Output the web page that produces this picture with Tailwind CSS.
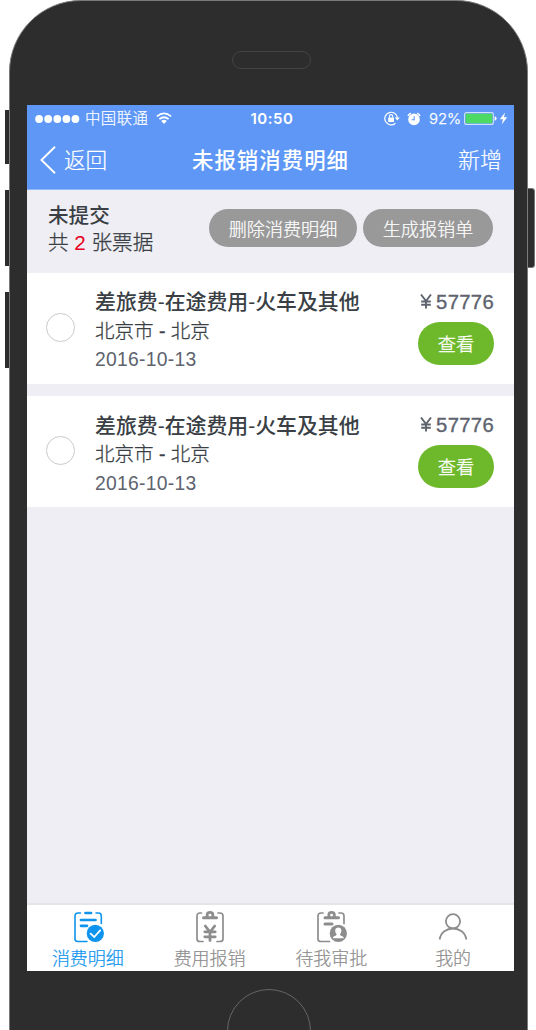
<!DOCTYPE html>
<html lang="zh-CN">
<head>
<meta charset="utf-8">
<title>未报销消费明细</title>
<script src="https://cdn.jsdelivr.net/npm/@tailwindcss/browser@4"></script>
</head>
<body class="bg-white font-['Liberation_Sans','Noto_Sans_CJK_SC',sans-serif]">
<div class="relative w-[536px] h-[1030px] overflow-hidden whitespace-nowrap">
  <!-- side keys -->
  <div class="absolute left-[5px] top-[110px] w-2 h-[54px] bg-[#2d2d2d]"></div>
  <div class="absolute left-[5px] top-[190px] w-2 h-[76px] bg-[#2d2d2d]"></div>
  <div class="absolute left-[5px] top-[292px] w-2 h-[76px] bg-[#2d2d2d]"></div>
  <div class="absolute left-[522px] top-[188px] w-[13px] h-[80px] rounded-[3px] bg-[#2d2d2d] border border-[#777]"></div>
  <!-- body -->
  <div class="relative ml-[9px] w-[519px] h-[1100px] rounded-t-[72px] bg-[#2d2d2d] border border-[#777b79] pl-[17px] pr-[13px] flex flex-col">
    <div class="h-[104px] flex justify-center pt-[50px] pl-[1px]">
      <div class="w-[79px] h-[18px] rounded-full border border-[#434343]"></div>
    </div>
    <div class="w-[487px] h-[866px] bg-[#efeef4] flex flex-col">
      <header class="h-[85px] bg-[#5e97f6] border-b border-[#8fb6f6] text-white">
        <div class="h-[27px] grid grid-cols-[1fr_auto_1fr] items-center">
          <div class="flex items-center pl-[8px]">
            <svg class="w-[45px] h-[8px]" viewBox="0 0 45 8" fill="#fff"><circle cx="4.1" cy="4" r="3.9"/><circle cx="13.2" cy="4" r="3.9"/><circle cx="22.3" cy="4" r="3.9"/><circle cx="31.4" cy="4" r="3.9"/><circle cx="40.4" cy="4" r="3.9"/></svg>
            <span class="ml-[5px] pt-[1px] text-[15.4px] leading-[26px] tracking-[0.45px] font-light [-webkit-text-stroke:0.2px]">中国联通</span>
            <svg class="ml-[8px] w-[16px] h-[13px]" viewBox="0 0 16 13"><g fill="none" stroke="#fff" stroke-width="1.8"><path d="M.9 4.4Q8-1.6 15.1 4.4"/><path d="M3.4 7.1Q8 3.3 12.6 7.1"/></g><path d="M5.2 9Q8 6.7 10.8 9L8 12.1Z" fill="#fff"/></svg>
          </div>
          <span class="font-['Inter'] font-semibold text-[15px] tracking-[0.55px] pl-[3px] pt-[1px]">10:50</span>
          <div class="flex items-center justify-end pr-[6px]">
            <svg class="w-[16px] h-[15px]" viewBox="0 0 16 15"><path d="M11.4 12.2A6.3 6.3 0 1 1 13.4 7" fill="none" stroke="#fff" stroke-width="1.2"/><path d="M10.8 6.5h5L13.3 9.6Z" fill="#fff"/><rect x="4.2" y="6.4" width="5.8" height="4.6" rx=".5" fill="#fff"/><path d="M5.5 6.6V5.2a1.6 1.6 0 0 1 3.200 0v1.4" fill="none" stroke="#fff" stroke-width="1.1"/></svg>
            <svg class="ml-[7px] w-[14px] h-[14px]" viewBox="0 0 14 14"><circle cx="7" cy="7.4" r="5.800" fill="#fff"/><path d="M1 4A4.5 4.5 0 0 1 4 1.2M10 1.2A4.5 4.5 0 0 1 13 4" fill="none" stroke="#fff" stroke-width="1.5"/><path d="M7.2 4.3V7.8H4.6" fill="none" stroke="#5e97f6" stroke-width="1.1"/></svg>
            <span class="ml-[8px] pt-[1px] font-['Inter'] font-light text-[15px] -tracking-[0.1px] [-webkit-text-stroke:0.25px]">92%</span>
            <svg class="ml-[3px] w-[33px] h-[13px]" viewBox="0 0 33 13"><rect x=".6" y=".6" width="28.8" height="11.8" rx="2" fill="none" stroke="#cfe0fb" stroke-width="1.1"/><rect x="1.7" y="1.7" width="26.600" height="9.6" rx="1" fill="#4cd964"/><path d="M30.6 4.2q2 .4 2 2.3t-2 2.3Z" fill="#fff"/></svg>
            <svg class="ml-[2px] w-[9px] h-[13px]" viewBox="0 0 9 13"><path d="M6 .6.8 7.300H4L2.600 12.500 8.300 5.300H5Z" fill="#fff"/></svg>
          </div>
        </div>
        <div class="h-[57px] grid grid-cols-[1fr_auto_1fr] items-center">
          <div class="flex items-center pl-[13px]">
            <svg class="w-[16px] h-[28px]" viewBox="0 0 16 28"><path d="M15 .8 1.5 14 15 27.2" fill="none" stroke="#fff" stroke-width="1.9"/></svg>
            <span class="ml-[8px] pt-[1px] text-[21.6px] font-light [-webkit-text-stroke:0.2px]">返回</span>
          </div>
          <span class="pt-[2px] text-[21.4px] tracking-[1.05px] font-medium">未报销消费明细</span>
          <span class="justify-self-end pr-[12px] text-[22px] font-light [-webkit-text-stroke:0.2px]">新增</span>
        </div>
      </header>
      <section class="h-[83px] flex text-[#3a3f45] pl-[21px] pr-[21px]">
        <div class="pt-[12px] text-[20.6px] leading-[27px]">
          <div class="font-medium">未提交</div>
          <div class="font-light [-webkit-text-stroke:0.3px]">共 <span class="text-[#e60021] [-webkit-text-stroke:0px]">2</span> 张票据</div>
        </div>
        <div class="ml-auto pt-[19px] flex gap-[6px] text-white text-[18.1px] font-light [-webkit-text-stroke:0.2px]">
          <div class="w-[148px] h-[38px] pt-[6px] rounded-full bg-[#999] flex items-center justify-center">删除消费明细</div>
          <div class="w-[130px] h-[38px] pt-[6px] rounded-full bg-[#999] flex items-center justify-center">生成报销单</div>
        </div>
      </section>
      <main class="flex-1 flex flex-col gap-[12px]">
        <article class="h-[111px] bg-white flex pl-[19px] pr-[20px]">
          <div class="mt-[40px] size-[29px] rounded-full border-[1.5px] border-[#c9cacc]"></div>
          <div class="ml-[20px] pt-[15px] leading-[29px] text-[#3a3f45]">
            <div class="-mt-px text-[20.9px] font-medium">差旅费-在途费用-火车及其他</div>
            <div class="mt-px text-[19.5px] font-light [-webkit-text-stroke:0.3px]">北京市 - 北京</div>
            <div class="-mt-px text-[19.3px] text-[#5e636e] tracking-[0.3px]">2016-10-13</div>
          </div>
          <div class="ml-auto flex flex-col items-end">
            <div class="mt-[15px] leading-[29px] text-[20.3px] text-[#5e636e] tracking-[0.3px] flex [-webkit-text-stroke:0.35px]"><svg class="w-[12px] h-[15px] mt-[6px] mr-[4px]" viewBox="0 0 12 15"><path d="M1 .5 6 7 11 .5M6 7V14.500M1.200 7.500h9.600M1.200 10.700h9.600" fill="none" stroke="#5e636e" stroke-width="1.9"/></svg>57776</div>
            <div class="mt-[5px] w-[76px] h-[43px] pt-[5px] rounded-full bg-[#6eb92b] text-white text-[18.2px] font-light [-webkit-text-stroke:0.3px] flex items-center justify-center">查看</div>
          </div>
        </article>
        <article class="h-[111px] bg-white flex pl-[19px] pr-[20px]">
          <div class="mt-[40px] size-[29px] rounded-full border-[1.5px] border-[#c9cacc]"></div>
          <div class="ml-[20px] pt-[15px] leading-[29px] text-[#3a3f45]">
            <div class="text-[20.9px] font-medium">差旅费-在途费用-火车及其他</div>
            <div class="text-[19.5px] font-light [-webkit-text-stroke:0.3px]">北京市 - 北京</div>
            <div class="text-[19.3px] text-[#5e636e] tracking-[0.3px]">2016-10-13</div>
          </div>
          <div class="ml-auto flex flex-col items-end">
            <div class="mt-[15px] leading-[29px] text-[20.3px] text-[#5e636e] tracking-[0.3px] flex [-webkit-text-stroke:0.35px]"><svg class="w-[12px] h-[15px] mt-[6px] mr-[4px]" viewBox="0 0 12 15"><path d="M1 .5 6 7 11 .5M6 7V14.500M1.200 7.500h9.600M1.200 10.700h9.600" fill="none" stroke="#5e636e" stroke-width="1.9"/></svg>57776</div>
            <div class="mt-[5px] w-[76px] h-[43px] pt-[5px] rounded-full bg-[#6eb92b] text-white text-[18.2px] font-light [-webkit-text-stroke:0.3px] flex items-center justify-center">查看</div>
          </div>
        </article>
      </main>
      <nav class="h-[68px] bg-white border-t-2 border-[#e5e5e7] grid grid-cols-4 text-[18px] leading-[24px] font-light text-[#8d8d8d]">
        <div class="flex flex-col items-center gap-[3px] pt-[6px] text-[#0d94ee]">
          <svg class="ml-[2px] w-[30px] h-[33px]" viewBox="0 0 30 33" fill="none" stroke="currentColor" stroke-linecap="round"><path d="M6.500 2H4Q1 2 1 5V28Q1 30.500 4 30.500H13M22 2h2.500Q27.300 2 27.300 5V12.500" stroke-width="1.6"/><path d="M11.500 2h5.500M7 9h14.500M7 14.800h6" stroke-width="2.7"/><circle cx="21.3" cy="22.4" r="8.6" fill="currentColor" stroke="none"/><path d="m16.600 22.600 3.600 3.400 6-6.600" stroke="#fff" stroke-width="1.8"/></svg>
          <span class="[-webkit-text-stroke:0.2px]">消费明细</span>
        </div>
        <div class="flex flex-col items-center gap-[3px] pt-[6px]">
          <svg class="w-[28px] h-[33px]" viewBox="0 0 28 33" fill="none" stroke="currentColor" stroke-linecap="round"><path d="M5.500 2H4Q1 2 1 5V28Q1 30.500 4 30.500H7M22 2h2Q27 2 27 5V28Q27 30.500 24 30.500H21" stroke-width="1.7"/><path d="M7.500 6.800h13" stroke-width="3"/><path d="M11.200 6V3.500Q11.200 1.400 14 1.400T16.800 3.500V6" stroke-width="2.8"/><path d="m9.300 15 4.700 6 4.700-6M14 21V29.500M8.800 20.800h10.400M8.800 25.800h10.400" stroke-width="2.8"/></svg>
          <span class="[-webkit-text-stroke:0.2px]">费用报销</span>
        </div>
        <div class="flex flex-col items-center gap-[3px] pt-[6px]">
          <svg class="ml-[2px] w-[30px] h-[33px]" viewBox="0 0 30 33" fill="none" stroke="currentColor" stroke-linecap="round"><path d="M6 2H4Q1 2 1 5V28Q1 30.500 4 30.500H12.500M22 2h2Q27 2 27 5V12.500" stroke-width="1.7"/><path d="M8 6.800h13.500M8 13h7" stroke-width="3"/><path d="M11.900 6V3.500Q11.900 1.400 14.600 1.400T17.300 3.500V6" stroke-width="2.8"/><circle cx="21.3" cy="22.400" r="8.600" fill="currentColor" stroke="none"/><path d="M21.300 16.600c3.800 0 3.800 4.500 1.600 7 0 1.500 3.600 1.300 3.900 3.600h-11c.3-2.300 3.900-2.100 3.900-3.600-2.200-2.500-2.200-7 1.600-7Z" fill="#fff" stroke="none"/></svg>
          <span class="[-webkit-text-stroke:0.2px]">待我审批</span>
        </div>
        <div class="flex flex-col items-center gap-[3px] pt-[6px]">
          <svg class="w-[30px] h-[33px]" viewBox="0 0 30 33" fill="none" stroke="currentColor" stroke-width="1.8"><circle cx="15" cy="10.3" r="7.100"/><path d="M1.700 28.500C3.500 13.800 26.500 13.800 28.300 28.500"/></svg>
          <span class="[-webkit-text-stroke:0.2px]">我的</span>
        </div>
      </nav>
    </div>
    <div class="pt-[18px] pl-[200px]"><div class="size-[84px] rounded-full border border-[#666]"></div></div>
  </div>
</div>
</body>
</html>
